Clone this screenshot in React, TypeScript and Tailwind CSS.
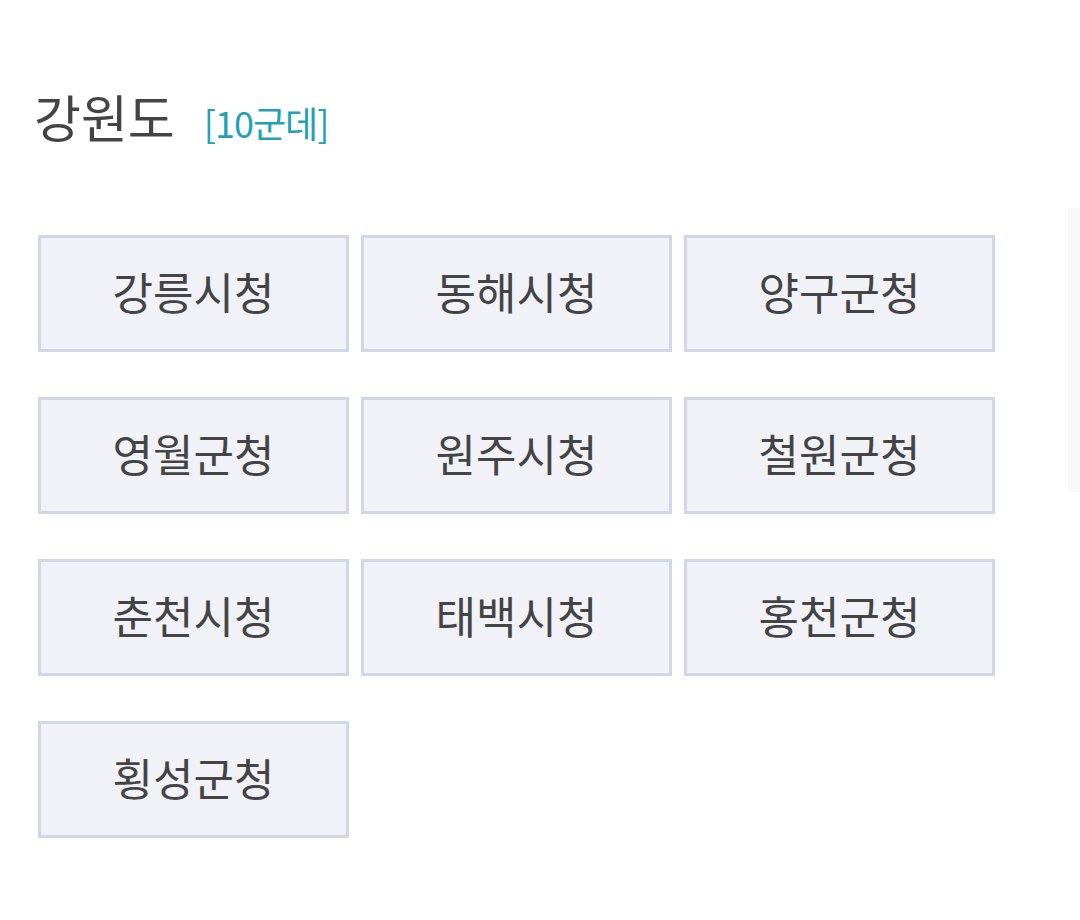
const offices = [
  '강릉시청',
  '동해시청',
  '양구군청',
  '영월군청',
  '원주시청',
  '철원군청',
  '춘천시청',
  '태백시청',
  '홍천군청',
  '횡성군청',
]

export default function App() {
  return (
    <main
      className="relative w-[1080px] h-[920px] bg-white overflow-hidden"
      style={{ fontFamily: '"Noto Sans CJK KR", "Noto Sans", sans-serif' }}
    >
      <div className="absolute right-0 top-[208px] w-[12px] h-[284px] bg-[#f8f8f8]" />
      <div className="pl-[38px] pt-[80px]">
        <h2 className="flex items-baseline gap-[29px] ml-[-4px]">
          <span className="text-[51px] leading-[72px] text-[#444]">강원도</span>
          <span className="text-[36px] text-[#1fa2b5] tracking-[-1px]">[10군데]</span>
        </h2>
        <div className="mt-[83px] grid grid-cols-[311px_311px_311px] gap-x-[12px] gap-y-[45px]">
          {offices.map((name) => (
            <button
              key={name}
              className="h-[117px] pb-[6px] border-[3px] border-[#d2d7e8] bg-[#f1f2f8] text-[44px] text-[#444] flex items-center justify-center"
            >
              {name}
            </button>
          ))}
        </div>
      </div>
    </main>
  )
}
